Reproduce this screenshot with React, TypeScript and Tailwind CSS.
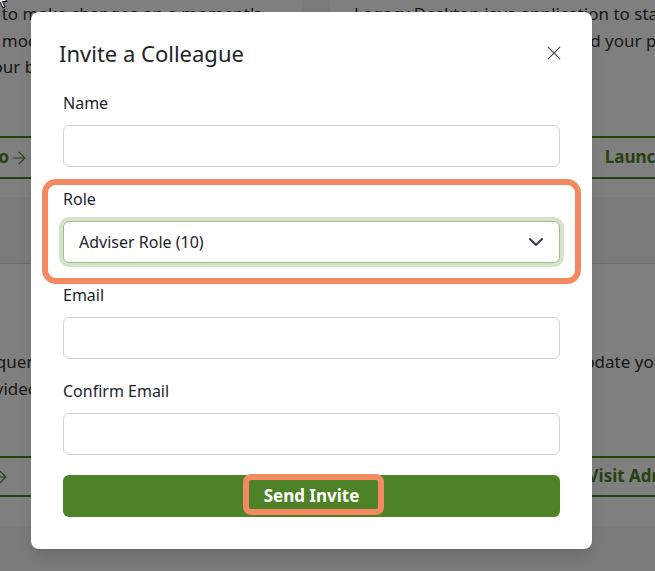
import { ArrowRight } from "lucide-react";

function Field({ label, value }: { label: string; value?: string }) {
  return (
    <div className="flex flex-col">
      <label className="mb-[10px] text-[16px] leading-6 text-[#212529]">{label}</label>
      <input
        readOnly
        value={value ?? ""}
        className="h-[42px] w-full rounded-md border border-[#ced4da] bg-white px-[15px] text-[16px] text-[#212529] outline-none"
      />
    </div>
  );
}

function CardLink({ label, className }: { label: string; className: string }) {
  return (
    <div className={`mt-auto flex items-center justify-center border-y-2 border-[#4e8226] font-bold text-[#4e8226] ${className}`}>
      {label}
      <ArrowRight className="h-5 w-5" strokeWidth={1.4} />
    </div>
  );
}

export default function App() {
  return (
    <div className="relative h-[571px] w-[655px] overflow-hidden bg-[#f4f4f4] font-['Noto_Sans',sans-serif] text-[#333]">
      {/* Page behind the dialog */}
      <div className="-ml-[404px] -mt-[40px] grid w-[1440px] grid-cols-[706px_706px] gap-x-[28px] gap-y-[66px] text-[17px] leading-[26.5px]">
        {/* Row 1 */}
        <div className="flex h-[237px] flex-col bg-white px-6 pb-[18px] pt-[41px]">
          <div className="whitespace-nowrap pl-[116px]">Use the web-based portfolio tool to make changes on a moment's</div>
          <div className="whitespace-nowrap pl-[131px]">notice from any device, with all modules you</div>
          <div className="whitespace-nowrap pl-[96px]">are available instantly, right from your browser.</div>
          <CardLink label="Launch Portfolio" className="h-[43px]" />
        </div>
        <div className="flex h-[237px] flex-col bg-white px-6 pb-[18px] pt-[41px]">
          <div className="whitespace-nowrap">Legacy Desktop java application to start working offline</div>
          <div className="whitespace-nowrap">updating all client records, and your portfolios</div>
          <CardLink label="Launch Desktop" className="h-[43px]" />
        </div>

        {/* Row 2 */}
        <div className="flex h-[263px] flex-col border-t border-[#d4d4d4] bg-white px-6 pb-[29px] pt-[85px]">
          <div className="whitespace-nowrap pl-[148px]">Find answers to the most frequently asked</div>
          <div className="whitespace-nowrap pl-[144px]">questions, or watch our new videos on how to</div>
          <CardLink label="Get Support" className="h-[41px]" />
        </div>
        <div className="flex h-[263px] flex-col border-t border-[#d4d4d4] bg-white px-6 pb-[29px] pt-[85px]">
          <div className="whitespace-nowrap">Manage users in your firm, update your</div>
          <div className="whitespace-nowrap">settings.</div>
          <CardLink label="Visit Admin Settings" className="h-[41px]" />
        </div>
      </div>

      {/* Backdrop + dialog */}
      <div className="absolute inset-0 bg-black/50">
        <div className="ml-[31px] mt-[12px] w-[561px] rounded-lg bg-white shadow-lg">
          <div className="flex items-center justify-between pl-[28px] pr-[30px] pt-[26px]">
            <h2 className="text-[22px] leading-[30px] text-[#212529]">Invite a Colleague</h2>
            <button className="flex h-4 w-4 items-center justify-center text-[#444]">
              <svg viewBox="0 0 16 16" className="h-[14px] w-[14px]" fill="none" stroke="currentColor" strokeWidth={1.4}>
                <path d="M1 1l14 14M15 1L1 15" />
              </svg>
            </button>
          </div>

          <div className="flex flex-col gap-5 px-8 pb-8 pt-[23px]">
            <Field label="Name" />

            <div className="relative">
              <div className="flex flex-col">
                <label className="mb-[10px] text-[16px] leading-6 text-[#212529]">Role</label>
                <div className="flex h-[42px] items-center justify-between rounded-md border border-[#a3bf87] bg-white pl-[15px] pr-[15px] text-[16px] text-[#212529] shadow-[0_0_0_4px_#d6e3c9]">
                  <span>Adviser Role (10)</span>
                  <svg viewBox="0 0 16 16" className="h-4 w-4" fill="none" stroke="#343a40" strokeWidth={2} strokeLinecap="round" strokeLinejoin="round">
                    <path d="M2 5l6 6 6-6" />
                  </svg>
                </div>
              </div>
              <div className="pointer-events-none absolute -bottom-[21px] -left-[21px] -right-[21px] -top-[8px] rounded-[14px] border-[6px] border-[#f58962]" />
            </div>

            <Field label="Email" />
            <Field label="Confirm Email" />

            <button className="relative flex h-[42px] items-center justify-center rounded-md bg-[#4e8226] text-[17px] font-bold text-white">
              Send Invite
              <span className="pointer-events-none absolute left-[180px] top-[-1px] h-[41px] w-[141px] rounded-lg border-[6px] border-[#f58962]" />
            </button>
          </div>
        </div>
      </div>

      {/* Mouse pointer, cut off at the top-left corner */}
      <svg viewBox="0 0 12 19" className="pointer-events-none absolute -left-[4px] -top-[10px] h-[19px] w-[12px]">
        <path d="M1 1v15l3.5-3.5 2.5 5.5 2-1-2.5-5.5H11z" fill="#fff" stroke="#000" strokeWidth={1} strokeLinejoin="round" />
      </svg>
    </div>
  );
}
